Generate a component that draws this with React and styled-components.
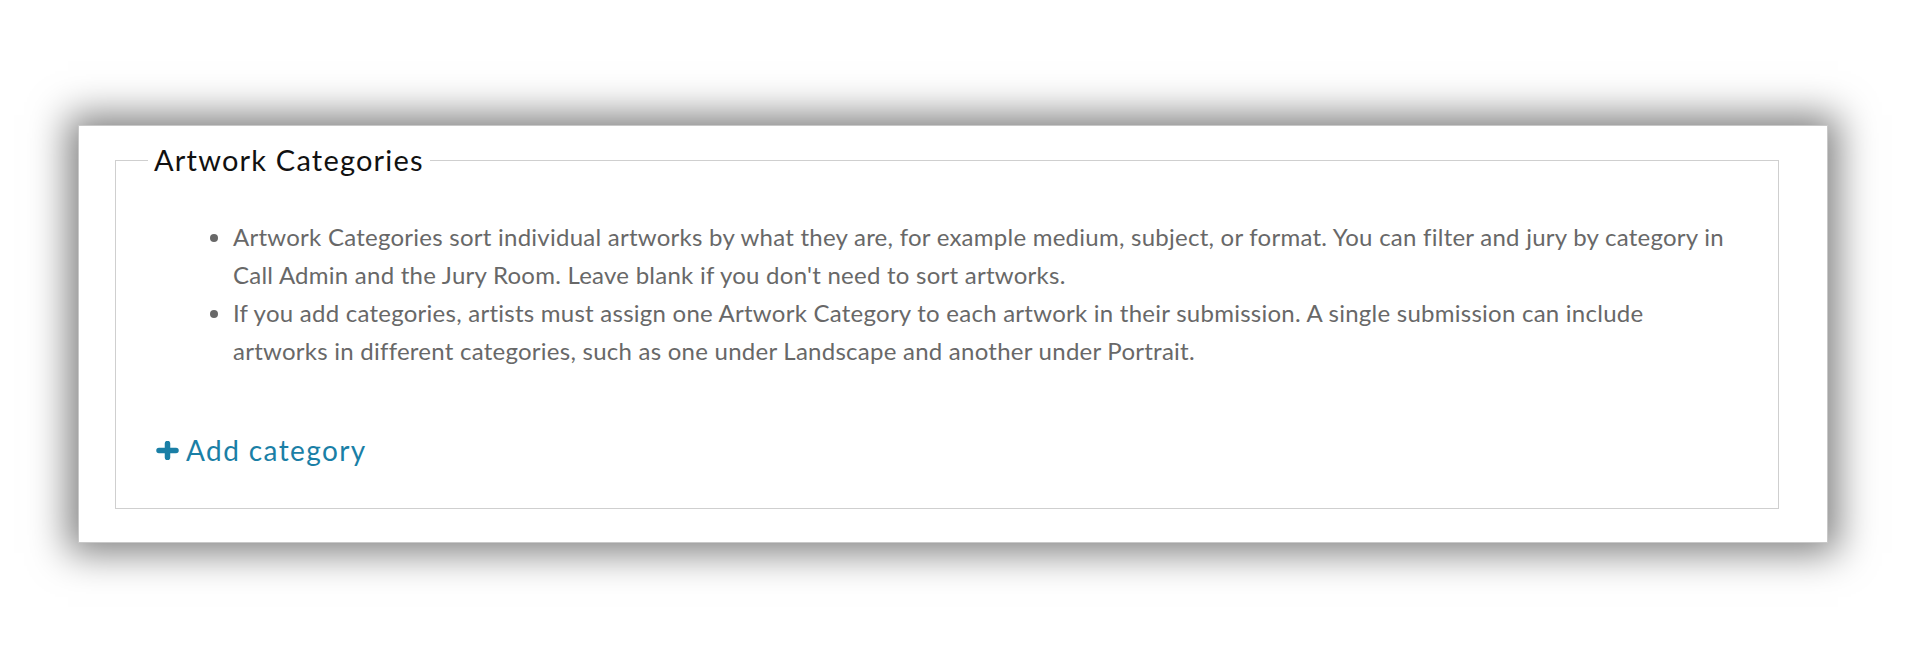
import styled, { createGlobalStyle } from "styled-components";

const GlobalStyle = createGlobalStyle`
  html, body {
    margin: 0;
    padding: 0;
    background: #ffffff;
  }
  body {
    font-family: Lato, "Noto Sans", "Liberation Sans", sans-serif;
  }
`;

const Page = styled.div`
  padding: 125px 0 0 78px;
  height: 668px;
  box-sizing: border-box;
`;

const Card = styled.section`
  width: 1750px;
  height: 418px;
  box-sizing: border-box;
  background: #ffffff;
  border: 1px solid #c8c8c8;
  box-shadow: 0 0 36px 10px rgba(0, 0, 0, 0.5);
  padding: 17px 48px 33px 36px;
`;

const Fieldset = styled.fieldset`
  margin: 0;
  height: 100%;
  box-sizing: border-box;
  border: 1px solid #cfcfcf;
  padding: 0 40px 0 39px;
  min-width: 0;
`;

const Legend = styled.legend`
  margin-left: -7px;
  padding: 0 6px;
  font-size: 29px;
  line-height: 34px;
  letter-spacing: 1.2px;
  color: #111111;
  font-weight: 400;
`;

const HelpList = styled.ul`
  margin: 41px 0 0;
  padding-left: 78px;
  color: #686868;
  font-size: 24px;
  line-height: 38px;
  letter-spacing: 0.25px;
`;

const HelpItem = styled.li`
  margin: 0;
`;

const AddLink = styled.a`
  display: inline-flex;
  align-items: center;
  gap: 6px;
  margin-top: 63px;
  color: #1a7fa6;
  font-size: 28px;
  line-height: 34px;
  letter-spacing: 1.4px;
  text-decoration: none;
  cursor: pointer;
`;

const PlusIcon = () => (
  <svg width="25" height="19" viewBox="0 0 25 19" aria-hidden="true">
    <path
      d="M12.5 2.5 V16.5 M4 9.5 H21"
      stroke="#1a7fa6"
      strokeWidth="5.5"
      strokeLinecap="round"
      fill="none"
    />
  </svg>
);

export default function App() {
  return (
    <>
      <GlobalStyle />
      <Page>
        <Card>
          <Fieldset>
            <Legend>Artwork Categories</Legend>
            <HelpList>
              <HelpItem>
                Artwork Categories sort individual artworks by what they are, for example medium,
                subject, or format. You can filter and jury by category in Call Admin and the Jury
                Room. Leave blank if you don't need to sort artworks.
              </HelpItem>
              <HelpItem>
                If you add categories, artists must assign one Artwork Category to each artwork in
                their submission. A single submission can include artworks in different categories,
                such as one under Landscape and another under Portrait.
              </HelpItem>
            </HelpList>
            <AddLink>
              <PlusIcon />
              Add category
            </AddLink>
          </Fieldset>
        </Card>
      </Page>
    </>
  );
}
